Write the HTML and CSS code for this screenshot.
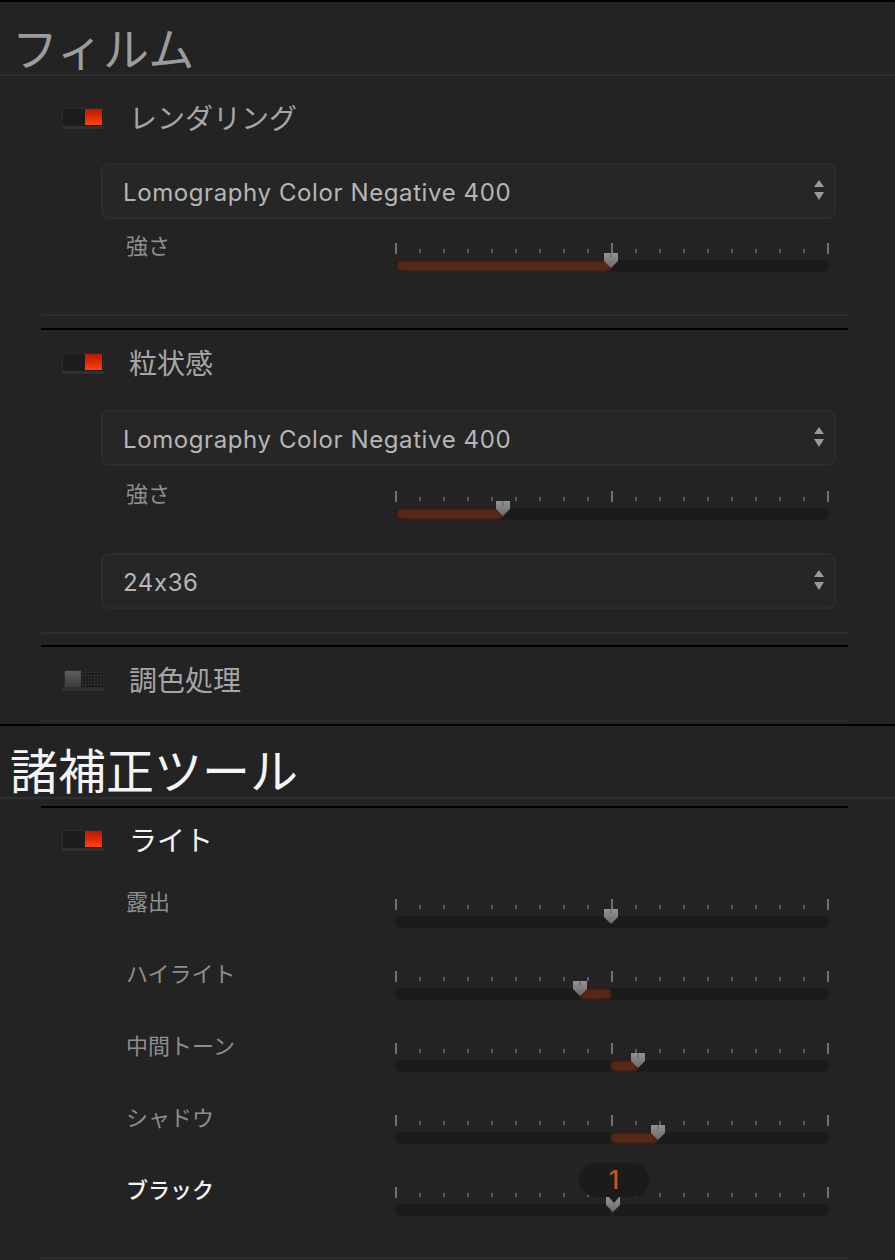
FILE: index.html
```html
<!DOCTYPE html>
<html lang="ja">
<head>
<meta charset="utf-8">
<title>フィルム</title>
<link rel="stylesheet" href="styles.css">
</head>
<body>
<div class="topline"></div>
<header class="group-header dim">フィルム</header>

<section class="tool first">
  <div class="tool-head">
    <span class="toggle on"><span class="knob"></span></span>
    <span class="tool-title">レンダリング</span>
  </div>
  <div class="select s1">
    <span class="select-text">Lomography Color Negative 400</span>
    <svg class="arrows" width="10" height="22" viewBox="0 0 10 22"><polygon points="5,0 10,7 0,7" fill="#9a9a9a"/><polygon points="0,12 10,12 5,20" fill="#9a9a9a"/></svg>
  </div>
  <div class="slider-row r1">
    <span class="slider-label">強さ</span>
    <div class="slider">
      <div class="ticks"></div>
      <div class="track"><div class="fill" style="left:2px;width:214px"></div></div>
      <svg class="thumb" style="left:209px" width="14" height="15" viewBox="0 0 14 15"><defs><linearGradient id="tg1" x1="0" y1="0" x2="0" y2="1"><stop offset="0" stop-color="#939393"/><stop offset="1" stop-color="#6a6a6a"/></linearGradient></defs><polygon points="0,0 14,0 14,8 7,15 0,8" fill="url(#tg1)"/><line x1="7" y1="0" x2="7" y2="5" stroke="#5c5c5c" stroke-width="1"/></svg>
    </div>
  </div>
</section>

<section class="tool second">
  <div class="tool-head">
    <span class="toggle on"><span class="knob"></span></span>
    <span class="tool-title">粒状感</span>
  </div>
  <div class="select s2">
    <span class="select-text">Lomography Color Negative 400</span>
    <svg class="arrows" width="10" height="22" viewBox="0 0 10 22"><polygon points="5,0 10,7 0,7" fill="#9a9a9a"/><polygon points="0,12 10,12 5,20" fill="#9a9a9a"/></svg>
  </div>
  <div class="slider-row r2">
    <span class="slider-label">強さ</span>
    <div class="slider">
      <div class="ticks"></div>
      <div class="track"><div class="fill" style="left:2px;width:106px"></div></div>
      <svg class="thumb" style="left:101px" width="14" height="15" viewBox="0 0 14 15"><polygon points="0,0 14,0 14,8 7,15 0,8" fill="url(#tg1)"/><line x1="7" y1="0" x2="7" y2="5" stroke="#5c5c5c" stroke-width="1"/></svg>
    </div>
  </div>
  <div class="select s3">
    <span class="select-text">24x36</span>
    <svg class="arrows" width="10" height="22" viewBox="0 0 10 22"><polygon points="5,0 10,7 0,7" fill="#9a9a9a"/><polygon points="0,12 10,12 5,20" fill="#9a9a9a"/></svg>
  </div>
</section>

<section class="tool third">
  <div class="tool-head">
    <span class="toggle off"><span class="knob"></span></span>
    <span class="tool-title">調色処理</span>
  </div>
</section>

<header class="group-header bright">諸補正ツール</header>

<section class="tool light">
  <div class="tool-head">
    <span class="toggle on"><span class="knob"></span></span>
    <span class="tool-title white">ライト</span>
  </div>
  <div class="rows">
    <div class="slider-row">
      <span class="slider-label">露出</span>
      <div class="slider">
        <div class="ticks"></div>
        <div class="track"></div>
        <svg class="thumb" style="left:209px" width="14" height="15" viewBox="0 0 14 15"><polygon points="0,0 14,0 14,8 7,15 0,8" fill="url(#tg1)"/><line x1="7" y1="0" x2="7" y2="5" stroke="#5c5c5c" stroke-width="1"/></svg>
      </div>
    </div>
    <div class="slider-row">
      <span class="slider-label">ハイライト</span>
      <div class="slider">
        <div class="ticks"></div>
        <div class="track"><div class="fill" style="left:185px;width:31px"></div></div>
        <svg class="thumb" style="left:178px" width="14" height="15" viewBox="0 0 14 15"><polygon points="0,0 14,0 14,8 7,15 0,8" fill="url(#tg1)"/><line x1="7" y1="0" x2="7" y2="5" stroke="#5c5c5c" stroke-width="1"/></svg>
      </div>
    </div>
    <div class="slider-row">
      <span class="slider-label">中間トーン</span>
      <div class="slider">
        <div class="ticks"></div>
        <div class="track"><div class="fill" style="left:216px;width:27px"></div></div>
        <svg class="thumb" style="left:236px" width="14" height="15" viewBox="0 0 14 15"><polygon points="0,0 14,0 14,8 7,15 0,8" fill="url(#tg1)"/><line x1="7" y1="0" x2="7" y2="5" stroke="#5c5c5c" stroke-width="1"/></svg>
      </div>
    </div>
    <div class="slider-row">
      <span class="slider-label">シャドウ</span>
      <div class="slider">
        <div class="ticks"></div>
        <div class="track"><div class="fill" style="left:216px;width:47px"></div></div>
        <svg class="thumb" style="left:256px" width="14" height="15" viewBox="0 0 14 15"><polygon points="0,0 14,0 14,8 7,15 0,8" fill="url(#tg1)"/><line x1="7" y1="0" x2="7" y2="5" stroke="#5c5c5c" stroke-width="1"/></svg>
      </div>
    </div>
    <div class="slider-row">
      <span class="slider-label white medium">ブラック</span>
      <div class="slider">
        <div class="ticks"></div>
        <div class="track"><div class="fill" style="left:216px;width:2px"></div></div>
        <svg class="thumb" style="left:211px" width="14" height="15" viewBox="0 0 14 15"><polygon points="0,0 14,0 14,8 7,15 0,8" fill="url(#tg1)"/><line x1="7" y1="0" x2="7" y2="5" stroke="#5c5c5c" stroke-width="1"/></svg>
        <div class="bubble" style="left:184px">1</div>
      </div>
    </div>
  </div>
</section>
</body>
</html>
```
FILE: styles.css
```css
* { box-sizing: border-box; }
html, body { margin: 0; padding: 0; }
body {
  background: #232323;
  width: 895px;
  height: 1260px;
  overflow: hidden;
  font-family: "Noto Sans CJK JP", "Noto Sans", sans-serif;
}
.topline { height: 2px; background: #000; }

.group-header {
  line-height: 48px;
  padding-left: 10px;
  border-bottom: 2px solid #2e2e2e;
}
.group-header.dim {
  font-size: 46px;
  color: #9c9c9c;
  height: 74px;
  padding-top: 20px;
  padding-left: 12px;
}
.group-header.bright {
  font-size: 48px;
  color: #f4f4f4;
  height: 75px;
  padding-top: 18px;
  border-top: 2px solid #000;
  margin-top: 2px;
}

.tool {
  margin-left: 41px;
  width: 807px;
  border-bottom: 2px solid #2d2d2d;
}
.tool.first { padding-top: 22px; padding-bottom: 42px; }
.tool.second { margin-top: 12px; border-top: 2px solid #000; padding-top: 13px; padding-bottom: 23px; }
.tool.third { margin-top: 11px; border-top: 2px solid #000; padding-top: 13px; padding-bottom: 20px; }
.tool.light { margin-top: 7px; border-top: 2px solid #000; padding-top: 12px; padding-bottom: 41px; }

.tool-head {
  height: 40px;
  display: flex;
  align-items: center;
  padding-left: 21px;
}
.tool-title {
  margin-left: 25px;
  font-size: 28px;
  line-height: 40px;
  color: #a6a6a6;
  margin-top: -2px;
}
.white { color: #f4f4f4 !important; }
.medium { font-weight: 500; }

.toggle {
  position: relative;
  width: 42px;
  height: 21px;
  background: #1c1c1c;
  border: 1px solid #2a2a2a;
  border-bottom: 3px solid #313131;
  border-radius: 1px;
}
.toggle .knob {
  position: absolute;
  top: 0;
  width: 17px;
  height: 16px;
}
.toggle.on .knob {
  right: 1px;
  background: linear-gradient(#b61b00, #e12c04 55%, #ff4417);
}
.toggle.off {
  background-color: #1c1c1c;
  background-image: radial-gradient(circle, #383838 0.8px, transparent 1.1px);
  background-size: 3px 3px;
}
.toggle.off .knob {
  left: 2px;
  width: 16px;
  background: linear-gradient(#5e5e5e, #474747 60%, #3c3c3c);
}

.select {
  height: 56px;
  margin-left: 60px;
  margin-right: 12px;
  border: 2px solid #2c2c2c;
  border-radius: 8px;
  background: #262626;
  display: flex;
  align-items: center;
  padding-left: 20px;
}
.select.s1 { margin-top: 25px; }
.select.s2 { margin-top: 27px; }
.select.s3 { margin-top: 33px; }
.select-text {
  font-family: "Inter", "Noto Sans", sans-serif;
  font-size: 24px;
  color: #b6b6b6;
  letter-spacing: 0.6px;
  padding-top: 2px;
}
.arrows { margin-left: auto; margin-right: 10px; }

.slider-row {
  display: flex;
  align-items: flex-start;
  margin-left: 85px;
  height: 36px;
}
.slider-row.r1 { margin-top: 17px; }
.slider-row.r2 { margin-top: 18px; }
.rows {
  margin-top: 32px;
  display: flex;
  flex-direction: column;
  gap: 36px;
}
.slider-label {
  width: 269px;
  font-size: 22px;
  line-height: 22px;
  color: #8e8e8e;
  margin-top: -3px;
}
.slider {
  position: relative;
  width: 434px;
  margin-top: 6px;
  height: 30px;
}
.ticks {
  height: 12px;
  background:
    linear-gradient(#707070, #707070) 0 1px / 2px 11px no-repeat,
    linear-gradient(#707070, #707070) 216px 1px / 2px 11px no-repeat,
    linear-gradient(#707070, #707070) 432px 1px / 2px 11px no-repeat,
    repeating-linear-gradient(to right, #5a5a5a 0 2px, transparent 2px 24px) 0 7px / 100% 4px no-repeat;
}
.track {
  position: relative;
  margin-top: 6px;
  height: 12px;
  border-radius: 6px;
  background: #1b1b1b;
  overflow: hidden;
}
.fill {
  position: absolute;
  top: 1px;
  bottom: 1px;
  background: #572813;
  border-radius: 4px;
  filter: blur(1.2px);
}
.thumb {
  position: absolute;
  top: 11px;
}
.bubble {
  position: absolute;
  top: -23px;
  width: 70px;
  height: 34px;
  border-radius: 17px;
  background: #1b1b1b;
  color: #c9531c;
  font-family: "Inter", "Noto Sans", sans-serif;
  font-size: 25px;
  font-weight: 500;
  line-height: 34px;
  text-align: center;
}
.bubble::after {
  content: "";
  position: absolute;
  left: 29px;
  top: 33px;
  border-left: 6px solid transparent;
  border-right: 6px solid transparent;
  border-top: 7px solid #1b1b1b;
}
```
